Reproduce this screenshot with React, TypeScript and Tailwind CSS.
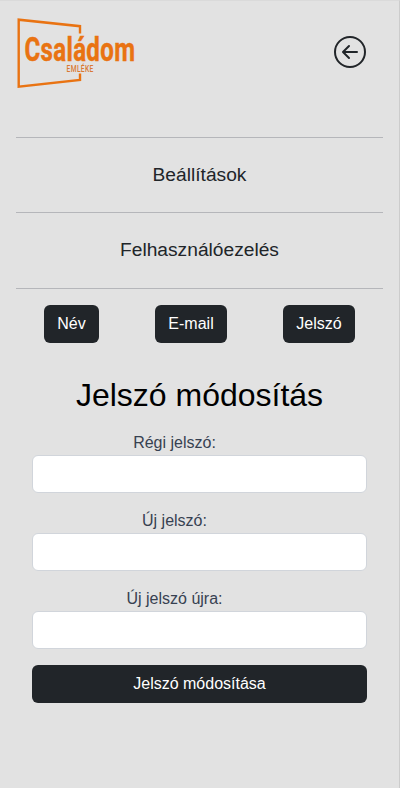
import { BsArrowLeftCircle } from "react-icons/bs";

function Logo() {
  return (
    <svg width="124" height="72" viewBox="0 0 124 72" className="block overflow-visible" aria-label="Családom emléke">
      <path
        d="M64 16.5V9.2L2.7 2.7V69.7L64 62.9V56.5"
        fill="none"
        stroke="#e97312"
        strokeWidth="2.4"
      />
      <text
        x="8.4"
        y="43.6"
        textLength="111"
        lengthAdjust="spacingAndGlyphs"
        fill="#e97312"
        stroke="#e97312"
        strokeWidth="0.5"
        className="font-['Roboto',sans-serif] text-[34px] font-bold tracking-[0.5px]"
      >
        Családom
      </text>
      <text
        x="50.6"
        y="54.5"
        textLength="27"
        lengthAdjust="spacingAndGlyphs"
        fill="#d97a34"
        className="font-['Roboto',sans-serif] text-[8.5px] font-medium tracking-[0.4px]"
      >
        EMLÉKE
      </text>
    </svg>
  );
}

function TabButton({ label }: { label: string }) {
  return (
    <button className="h-[38px] rounded-md bg-[#212529] px-[13px] text-base text-white">{label}</button>
  );
}

function PasswordField({ label }: { label: string }) {
  return (
    <label className="mb-4 block">
      <span className="block h-6 w-[285px] text-center text-base leading-6 text-[#374151]">{label}</span>
      <input
        type="password"
        className="block h-[38px] w-full rounded-md border border-[#d1d5db] bg-white px-3"
      />
    </label>
  );
}

export default function App() {
  return (
    <main className="h-[788px] w-[400px] overflow-hidden border-t border-r border-t-[#dadada] border-r-[#cccccc] bg-[#e2e2e2] px-4 font-['Liberation_Sans',Arial,sans-serif]">
      <header className="flex h-[136px] items-start justify-between pt-4">
        <Logo />
        <BsArrowLeftCircle className="mt-[19px] mr-[17px] size-8 text-[#212529]" />
      </header>
      <nav className="text-center text-[19.2px] text-[#212529]">
        <div className="flex h-[75px] items-center justify-center border-t border-[#b5b6ba]">Beállítások</div>
        <div className="flex h-[77px] items-center justify-center border-y border-[#b5b6ba]">
          Felhasználóezelés
        </div>
      </nav>
      <div className="flex justify-around pt-4">
        <TabButton label="Név" />
        <TabButton label="E-mail" />
        <TabButton label="Jelszó" />
      </div>
      <section className="px-4 pt-8">
        <h1 className="mb-4 text-center text-[32px] leading-10 text-black">Jelszó módosítás</h1>
        <form>
          <PasswordField label="Régi jelszó:" />
          <PasswordField label="Új jelszó:" />
          <PasswordField label="Új jelszó újra:" />
          <button type="button" className="h-[38px] w-full rounded-md bg-[#212529] text-base text-white">
            Jelszó módosítása
          </button>
        </form>
      </section>
    </main>
  );
}
